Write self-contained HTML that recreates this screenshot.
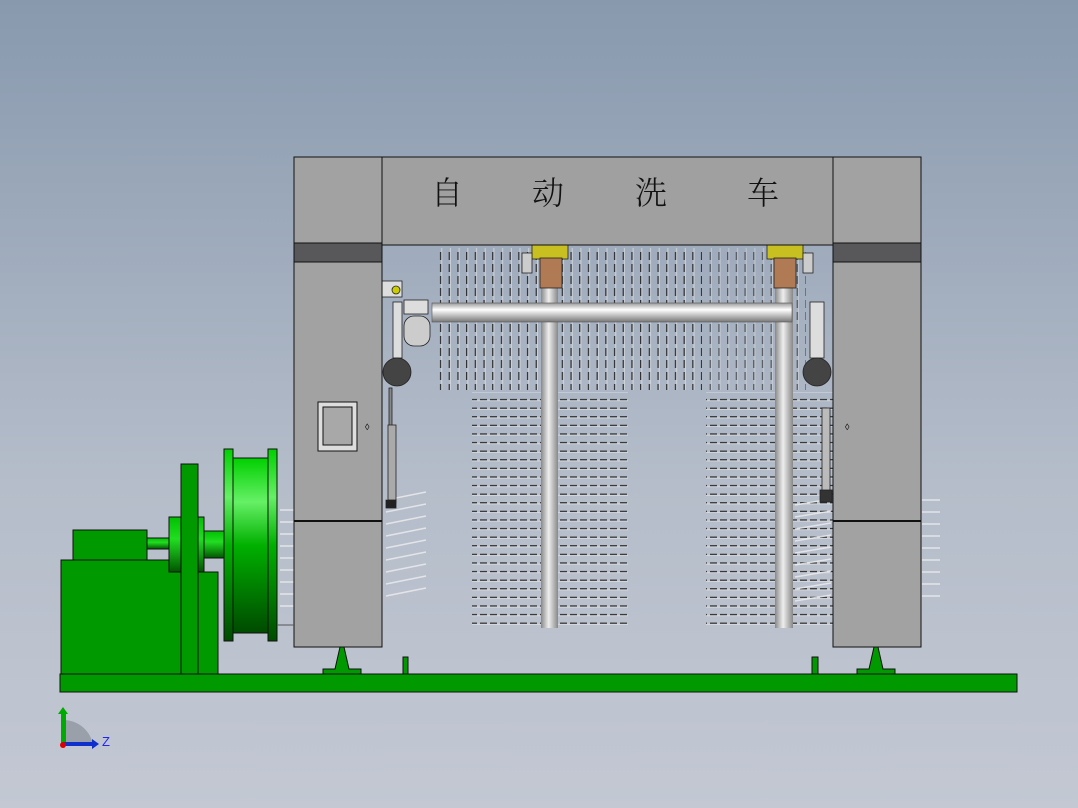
<!DOCTYPE html>
<html><head><meta charset="utf-8"><style>
html,body{margin:0;padding:0;width:1078px;height:808px;overflow:hidden}
body{background:linear-gradient(#8899ae,#b5bdca 60%,#c3c8d3)}
svg{position:absolute;left:0;top:0}
</style></head><body>
<svg width="1078" height="808" viewBox="0 0 1078 808" xmlns="http://www.w3.org/2000/svg">
<defs>
<pattern id="vd" width="8.7" height="12" patternUnits="userSpaceOnUse" x="437">
<rect x="3" y="0" width="1.2" height="8" fill="#222"/><rect x="4.2" y="0" width="1" height="12" fill="#eee" opacity=".6"/>
</pattern>
<pattern id="hd" width="10" height="8.6" patternUnits="userSpaceOnUse" y="396">
<rect x="0" y="3" width="7" height="1.2" fill="#222"/><rect x="0" y="4.2" width="10" height="1" fill="#eee" opacity=".6"/>
</pattern>
<linearGradient id="tube" x1="0" y1="0" x2="0" y2="1"><stop offset="0" stop-color="#999"/><stop offset=".35" stop-color="#fff"/><stop offset="1" stop-color="#777"/></linearGradient>
<linearGradient id="col" x1="0" y1="0" x2="1" y2="0"><stop offset="0" stop-color="#888"/><stop offset=".45" stop-color="#eee"/><stop offset="1" stop-color="#888"/></linearGradient>
<linearGradient id="drum" x1="0" y1="0" x2="0" y2="1"><stop offset="0" stop-color="#00d000"/><stop offset=".25" stop-color="#66f066"/><stop offset=".5" stop-color="#00b000"/><stop offset="1" stop-color="#004a00"/></linearGradient>
<linearGradient id="shaft" x1="0" y1="0" x2="0" y2="1"><stop offset="0" stop-color="#00c000"/><stop offset=".4" stop-color="#22dd22"/><stop offset="1" stop-color="#005500"/></linearGradient>
</defs>
<!-- brushes -->
<rect x="437" y="248" width="265" height="142" fill="url(#vd)"/>
<rect x="472" y="392" width="156" height="234" fill="url(#hd)"/>
<rect x="706" y="392" width="130" height="234" fill="url(#hd)"/>
<rect x="706" y="248" width="100" height="142" fill="url(#vd)" opacity=".7"/>
<g stroke="#eee" stroke-width="1.5" opacity=".8">
<path d="M386 500l40-8M386 512l40-8M386 524l40-8M386 536l40-8M386 548l40-8M386 560l40-8M386 572l40-8M386 584l40-8M386 596l40-8"/>
<path d="M280 510h14M280 522h14M280 534h14M280 546h14M280 558h14M280 570h14M280 582h14M280 594h14M280 606h14"/>
<path d="M922 500h18M922 512h18M922 524h18M922 536h18M922 548h18M922 560h18M922 572h18M922 584h18M922 596h18"/>
<path d="M795 505l36-6M795 517l36-6M795 529l36-6M795 541l36-6M795 553l36-6M795 565l36-6M795 577l36-6M795 589l36-6M795 601l36-6"/>
</g>
<!-- columns -->
<rect x="541" y="288" width="17" height="340" fill="url(#col)"/>
<rect x="775" y="288" width="18" height="340" fill="url(#col)"/>
<!-- top carriages -->
<g stroke="#222" stroke-width=".8">
<rect x="532" y="245" width="36" height="14" fill="#c8c020"/>
<rect x="540" y="258" width="22" height="30" fill="#b07a55"/>
<rect x="522" y="253" width="10" height="20" fill="#ccc"/>
<rect x="767" y="245" width="36" height="14" fill="#c8c020"/>
<rect x="774" y="258" width="22" height="30" fill="#b07a55"/>
<rect x="803" y="253" width="10" height="20" fill="#ccc"/>
</g>
<!-- roller -->
<rect x="432" y="303" width="360" height="19" fill="url(#tube)" stroke="#555" stroke-width=".6"/>
<!-- left motor assembly -->
<g stroke="#222" stroke-width=".8">
<rect x="382" y="281" width="20" height="16" fill="#ddd"/><circle cx="396" cy="290" r="4" fill="#cc0"/>
<rect x="393" y="302" width="9" height="56" fill="#ddd"/>
<rect x="404" y="300" width="24" height="14" fill="#ddd"/>
<rect x="404" y="316" width="26" height="30" rx="10" fill="#ccc"/>
<circle cx="397" cy="372" r="14" fill="#444"/>
<rect x="389" y="388" width="3" height="110" fill="#888"/>
<rect x="388" y="425" width="8" height="78" fill="#aaa"/>
<rect x="386" y="500" width="10" height="8" fill="#222"/>
<rect x="810" y="302" width="14" height="56" fill="#ddd"/>
<circle cx="817" cy="372" r="14" fill="#444"/>
<rect x="822" y="408" width="8" height="84" fill="#bbb"/>
<rect x="820" y="490" width="12" height="12" fill="#333"/>
</g>
<!-- pillars -->
<g stroke="#111" stroke-width="1">
<rect x="294" y="157" width="88" height="490" fill="#a2a2a2"/>
<rect x="294" y="243" width="88" height="19" fill="#58585a"/>
<line x1="294" y1="521" x2="382" y2="521" stroke-width="2"/>
<rect x="833" y="157" width="88" height="490" fill="#a2a2a2"/>
<rect x="833" y="243" width="88" height="19" fill="#58585a"/>
<line x1="833" y1="521" x2="921" y2="521" stroke-width="2"/>
<rect x="382" y="157" width="451" height="88" fill="#a0a0a0"/>
<rect x="318" y="402" width="39" height="49" fill="#ddd"/>
<rect x="323" y="407" width="29" height="38" fill="#a8a8a8"/>
</g>
<text x="365" y="430" font-size="9" font-family="Liberation Sans">◊</text>
<text x="845" y="430" font-size="9" font-family="Liberation Sans">◊</text>
<g font-family="'Noto Serif CJK SC','Liberation Serif',serif" font-size="32" font-weight="300" fill="#111" text-anchor="middle">
<text x="447" y="204">自</text><text x="548" y="204">动</text><text x="651" y="204">洗</text><text x="763" y="204">车</text>
</g>
<!-- green machinery -->
<g stroke="#111" stroke-width="1">
<rect x="60" y="674" width="957" height="18" fill="#009900"/>
<rect x="61" y="560" width="120" height="114" fill="#009900"/>
<rect x="73" y="530" width="74" height="30" fill="#009900"/>
<rect x="147" y="538" width="22" height="11" fill="url(#shaft)"/>
<rect x="169" y="517" width="35" height="55" fill="url(#shaft)"/>
<rect x="198" y="572" width="20" height="102" fill="#009900"/>
<rect x="181" y="464" width="17" height="210" fill="#009900"/>
<rect x="204" y="531" width="20" height="27" fill="url(#shaft)"/>
<rect x="233" y="458" width="35" height="175" fill="url(#drum)"/>
<rect x="224" y="449" width="9" height="192" fill="url(#drum)"/>
<rect x="268" y="449" width="9" height="192" fill="url(#drum)"/>
<path d="M323 674v-5h12l5-22h4l5 22h12v5z" fill="#009900"/>
<path d="M857 674v-5h12l5-22h4l5 22h12v5z" fill="#009900"/>
<rect x="403" y="657" width="5" height="17" fill="#009900"/>
<rect x="812" y="657" width="6" height="17" fill="#009900"/>
</g>
<line x1="277" y1="625" x2="294" y2="625" stroke="#555"/>
<!-- axis -->
<path d="M63 745V720A30 30 0 0 1 93 745z" fill="#9aa0aa"/>
<rect x="61" y="712" width="5" height="33" fill="#0a0"/>
<path d="M58 714l5-7 5 7z" fill="#0a0"/>
<rect x="63" y="742" width="30" height="4" fill="#1030cc"/>
<path d="M92 739l7 5-7 5z" fill="#1030cc"/>
<circle cx="63" cy="745" r="3" fill="#d00"/>
<text x="102" y="746" font-family="Liberation Sans" font-size="13" fill="#22f">Z</text>
</svg>
</body></html>
